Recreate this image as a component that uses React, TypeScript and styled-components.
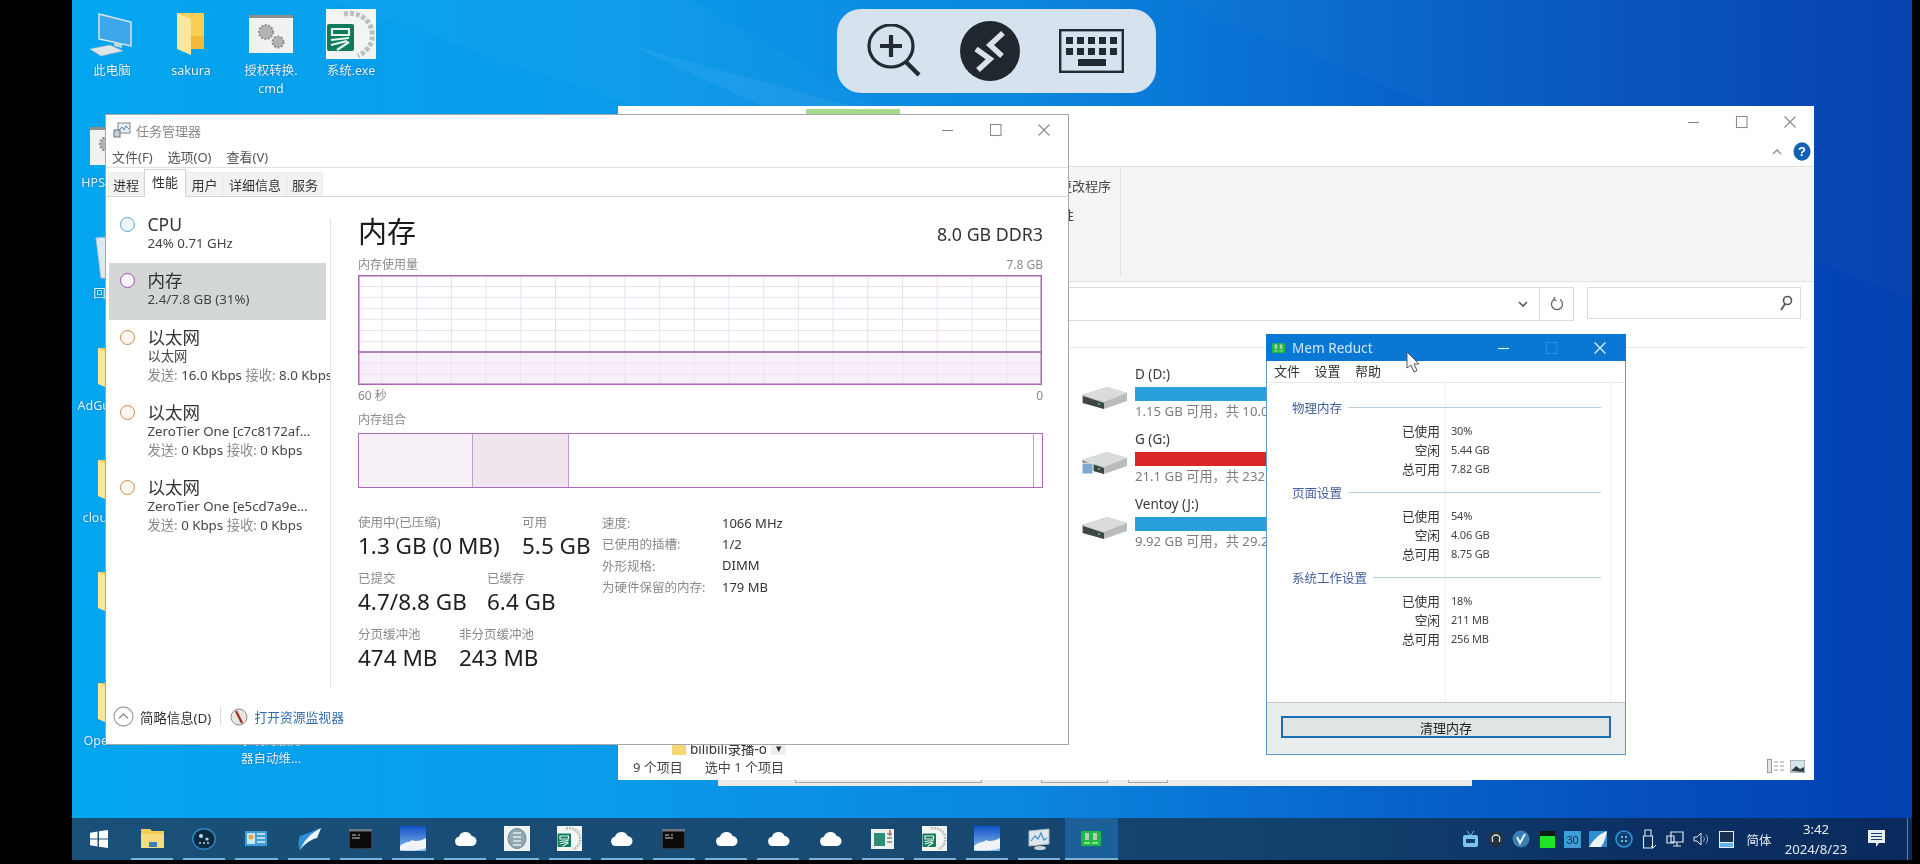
import React from "react";
import styled, { createGlobalStyle } from "styled-components";

const FONT = `"Noto Sans", "Noto Sans CJK SC", sans-serif`;

const Global = createGlobalStyle`
  html, body { margin: 0; padding: 0; background: #000; overflow: hidden; }
  body { font-family: ${FONT}; }
  #root { width: 1920px; height: 864px; }
`;

const Screen = styled.div`
  position: relative;
  width: 1920px;
  height: 864px;
  background: #000;
  overflow: hidden;
`;
const Desktop = styled.div`
  position: absolute;
  left: 72px;
  top: 0;
  width: 1840px;
  height: 860px;
  overflow: hidden;
  filter: blur(0.5px);
  background: linear-gradient(90deg, #04a6f0 0%, #0a9aea 30%, #0b86e0 52%, #0766cc 70%, #0550bd 85%, #0340b0 100%);
`;
const Wallpaper = styled.svg`
  position: absolute;
  inset: 0;
`;

/* desktop shortcuts */
const Shortcut = styled.div<{ $x: number; $y: number }>`
  position: absolute;
  left: ${(p) => p.$x - 72}px;
  top: ${(p) => p.$y}px;
  width: 80px;
  display: flex;
  flex-direction: column;
  align-items: center;
`;
const ShortcutIcon = styled.div`
  height: 52px;
  margin-bottom: 2px;
  display: flex;
  align-items: center;
  justify-content: center;
`;
const ShortcutLabel = styled.div`
  width: 76px;
  text-align: center;
  font-size: 12.5px;
  line-height: 18px;
  color: #e6f6ff;
  white-space: pre-line;
  text-shadow: 0 0 2px rgba(0, 40, 90, 0.5);
`;

/* windows */
const Win = styled.div<{ $x: number; $y: number; $w: number; $h: number }>`
  position: absolute;
  left: ${(p) => p.$x - 72}px;
  top: ${(p) => p.$y}px;
  width: ${(p) => p.$w}px;
  height: ${(p) => p.$h}px;
  box-sizing: border-box;
  display: flex;
  flex-direction: column;
  background: #fff;
  color: #222;
`;
const CtrlRow = styled.div`
  display: flex;
  margin-left: auto;
  height: 100%;
`;
const CtrlBtn = styled.div`
  width: 48px;
  display: flex;
  align-items: center;
  justify-content: center;
`;

const Controls = ({ color = "#8c8c8c", mid }: { color?: string; mid?: string }) => (
  <CtrlRow>
    <CtrlBtn><svg width="14" height="14" viewBox="0 0 14 14"><path d="M1 7.5h11" stroke={color} strokeWidth="1.2" /></svg></CtrlBtn>
    <CtrlBtn><svg width="14" height="14" viewBox="0 0 14 14"><rect x="1.5" y="1.5" width="10.5" height="11" fill="none" stroke={mid || color} strokeWidth="1.1" /></svg></CtrlBtn>
    <CtrlBtn><svg width="14" height="14" viewBox="0 0 14 14"><path d="M1.5 1.5l11 11M12.5 1.5l-11 11" stroke={color} strokeWidth="1.2" /></svg></CtrlBtn>
  </CtrlRow>
);

/* explorer */
const ExpTitle = styled.div`
  position: relative;
  height: 60px;
  flex: none;
  display: flex;
  flex-direction: column;
  border-bottom: 1px solid #e2e2e2;
`;
const ContextTab = styled.div`
  position: absolute;
  left: 188px;
  top: 3px;
  width: 94px;
  height: 6px;
  background: #a6d98c;
`;
const ExpCtrl = styled.div`
  height: 32px;
  display: flex;
`;
const RibbonToggle = styled.div`
  flex: 1;
  display: flex;
  align-items: center;
  justify-content: flex-end;
  gap: 11px;
  padding: 0 3px 2px 0;
`;
const Ribbon = styled.div`
  flex: none;
  height: 115px;
  background: #f5f5f5;
  border-bottom: 1px solid #e4e4e4;
  box-sizing: border-box;
  display: flex;
`;
const RibbonGroup = styled.div`
  width: 503px;
  height: 110px;
  box-sizing: border-box;
  border-right: 1px solid #e3e3e3;
  padding: 11px 0 0 441px;
  font-size: 13px;
  line-height: 16px;
  color: #444;
  white-space: nowrap;
`;
const RibbonSub = styled.div`
  margin: 13px 0 0 2px;
`;
const AddressRow = styled.div`
  flex: none;
  height: 66px;
  box-sizing: border-box;
  padding: 5px 5px 0 0;
  border-bottom: 1px solid #e9e9e9;
  margin-right: 8px;
  display: flex;
`;
const AddressBox = styled.div`
  flex: 1;
  height: 32px;
  border: 1px solid #dcdcdc;
  display: flex;
  justify-content: flex-end;
  align-items: center;
`;
const AddressDrop = styled.div`
  width: 33px;
  height: 100%;
  display: flex;
  align-items: center;
  justify-content: center;
  border-right: 1px solid #dcdcdc;
`;
const AddressRefresh = styled.div`
  width: 33px;
  display: flex;
  align-items: center;
  justify-content: center;
`;
const SearchBox = styled.div`
  width: 214px;
  height: 32px;
  margin-left: 13px;
  border: 1px solid #dcdcdc;
  display: flex;
  justify-content: flex-end;
  align-items: center;
  padding-right: 7px;
  box-sizing: border-box;
`;
const Drives = styled.div`
  flex: 1;
  padding: 16px 0 0 464px;
  display: flex;
  flex-direction: column;
  gap: 8px;
`;
const Drive = styled.div`
  display: flex;
  gap: 8px;
`;
const DriveIconBox = styled.div`
  width: 45px;
  padding-top: 21px;
`;
const DriveInfo = styled.div`
  width: 260px;
`;
const DriveName = styled.div`
  font-size: 13.5px;
  line-height: 20px;
  height: 23px;
  color: #3a3a3a;
`;
const DriveBar = styled.div<{ $c: string }>`
  height: 14px;
  background: ${(p) => p.$c};
`;
const DriveFree = styled.div`
  font-size: 13.2px;
  line-height: 20px;
  color: #7d7d7d;
  white-space: nowrap;
`;
const FileRow = styled.div`
  flex: none;
  height: 14px;
  padding-left: 54px;
  display: flex;
  align-items: flex-start;
  gap: 4px;
  font-size: 13.5px;
  line-height: 17px;
  color: #333;
  & > svg {
    align-self: flex-end;
  }
`;
const FileName = styled.span`
  height: 17px;
`;
const FileChevron = styled.span`
  width: 15px;
  height: 13px;
  margin-top: 1px;
  background: #eeeeee;
  font-size: 11px;
  line-height: 11px;
  text-align: center;
`;
const StatusBar = styled.div`
  flex: none;
  height: 25px;
  box-sizing: border-box;
  padding: 0 9px 3px 15px;
  display: flex;
  align-items: center;
  gap: 22px;
  font-size: 13px;
  color: #444;
`;
const ViewIcons = styled.div`
  margin-left: auto;
  display: flex;
  gap: 6px;
  align-items: center;
`;
const PeekWin = styled.div`
  position: absolute;
  left: 646px;
  top: 780px;
  width: 754px;
  height: 6px;
  background: #ebebeb;
  display: flex;
`;
const PeekBtn = styled.div<{ $l: number; $w: number }>`
  margin-left: ${(p) => p.$l}px;
  width: ${(p) => p.$w}px;
  height: 3px;
  box-sizing: border-box;
  border: 1px solid #a8a8a8;
  border-top: none;
`;

/* task manager */
const TmWin = styled(Win)`
  border: 1px solid #a6a6a6;
`;
const TmTitle = styled.div`
  height: 30px;
  flex: none;
  display: flex;
  align-items: center;
  padding-left: 7px;
  gap: 5px;
  font-size: 13px;
  color: #8b8b8b;
`;
const MenuBar = styled.div`
  height: 22px;
  flex: none;
  display: flex;
  align-items: center;
  gap: 15px;
  padding-left: 6px;
  font-size: 13px;
  color: #555;
  border-bottom: 1px solid #e0e0e0;
`;
const Tabs = styled.div`
  height: 28px;
  flex: none;
  display: flex;
  align-items: flex-end;
  padding-left: 2px;
  border-bottom: 1px solid #d4d4d4;
`;
const Tab = styled.div<{ $w: number; $on?: boolean }>`
  width: ${(p) => p.$w}px;
  height: ${(p) => (p.$on ? 28 : 24)}px;
  margin-bottom: ${(p) => (p.$on ? -1 : 0)}px;
  padding-bottom: ${(p) => (p.$on ? 5 : 1)}px;
  box-sizing: border-box;
  position: relative;
  display: flex;
  align-items: center;
  justify-content: center;
  font-size: 13px;
  color: #333;
  background: ${(p) => (p.$on ? "#fff" : "#f2f2f2")};
  border: 1px solid ${(p) => (p.$on ? "#d4d4d4" : "#ececec")};
  border-bottom: none;
`;
const TmBody = styled.div`
  flex: 1;
  min-height: 0;
  display: flex;
`;
const Sidebar = styled.div`
  width: 224px;
  flex: none;
  box-sizing: border-box;
  padding: 10px 0 0 3px;
  overflow: hidden;
`;
const SideDivider = styled.div`
  width: 1px;
  margin: 21px 0 5px;
  background: #e2e2e2;
  flex: none;
`;
const SideItem = styled.div<{ $on?: boolean }>`
  width: 217px;
  box-sizing: border-box;
  padding: 8px 0 10.3px 11px;
  display: flex;
  gap: 12.500px;
  white-space: nowrap;
  background: ${(p) => (p.$on ? "#d3d7d5" : "transparent")};
`;
const Dot = styled.div<{ $c: string; $tint: string }>`
  width: 15px;
  height: 15px;
  margin-top: 2px;
  flex: none;
  box-sizing: border-box;
  border-radius: 50%;
  border: 1.6px solid ${(p) => p.$c};
  background: ${(p) => p.$tint};
`;
const SideName = styled.div`
  height: 19px;
  font-size: 17.5px;
  line-height: 19px;
  color: #333;
`;
const SideLine = styled.div`
  height: 19px;
  font-size: 13.3px;
  line-height: 19px;
  color: #444;
`;
const Dim = styled.span`
  color: #8a8a8a;
`;
const Main = styled.div`
  flex: 1;
  min-width: 0;
  padding: 16px 25px 0 27px;
`;
const MainHead = styled.div`
  height: 42px;
  display: flex;
  justify-content: space-between;
  align-items: center;
`;
const MainTitle = styled.div`
  font-size: 29px;
  line-height: 38px;
  margin-bottom: 4px;
  color: #1a1a1a;
`;
const MainSpec = styled.div`
  font-size: 17.8px;
  line-height: 44px;
  color: #333;
`;
const CaptionRow = styled.div<{ $h: number; $end?: boolean; $top?: number }>`
  height: ${(p) => p.$h}px;
  display: flex;
  justify-content: space-between;
  align-items: ${(p) => (p.$end ? "flex-end" : "flex-start")};
  font-size: 12px;
  line-height: 16px;
  color: #8a8a8a;
  padding-top: ${(p) => (p.$end ? 0 : p.$top ?? 3)}px;
  padding-bottom: ${(p) => (p.$end ? 5 : 0)}px;
  box-sizing: border-box;
`;
const Chart = styled.svg`
  display: block;
`;
const CompBar = styled.div`
  height: 55px;
  box-sizing: border-box;
  border: 1.5px solid #a96bb6;
  display: flex;
`;
const CompSeg = styled.div<{ $w?: number; $bg: string; $line?: boolean }>`
  ${(p) => (p.$w ? `width: ${p.$w}px; flex: none;` : "flex: 1;")}
  background: ${(p) => p.$bg};
  ${(p) => (p.$line ? "border-right: 1px solid #c49ccc;" : "")}
`;
const Stats = styled.div`
  margin-top: 26px;
  display: flex;
`;
const StatsLeft = styled.div`
  width: 244px;
  flex: none;
  display: flex;
  flex-direction: column;
  gap: 8px;
`;
const StatRow = styled.div`
  display: flex;
`;
const StatCol = styled.div<{ $w: number }>`
  width: ${(p) => p.$w}px;
  flex: none;
  white-space: nowrap;
`;
const StatLabel = styled.div`
  height: 16px;
  font-size: 12.5px;
  line-height: 17px;
  color: #8a8a8a;
`;
const StatValue = styled.div`
  height: 32px;
  font-size: 22.5px;
  line-height: 32px;
  color: #1f1f1f;
`;
const Specs = styled.div`
  display: grid;
  grid-template-columns: 120px auto;
  grid-auto-rows: 21.3px;
  align-items: center;
  align-self: flex-start;
  margin-top: -2px;
  font-size: 13px;
`;
const SpecKey = styled.div`
  color: #8a8a8a;
  font-size: 12.5px;
  white-space: nowrap;
`;
const SpecVal = styled.div`
  color: #333;
`;
const TmFooter = styled.div`
  height: 51px;
  flex: none;
  display: flex;
  align-items: flex-start;
  padding: 13px 0 0 7px;
  box-sizing: border-box;
  font-size: 13.4px;
  color: #333;
`;
const FootItem = styled.div`
  display: flex;
  align-items: center;
  gap: 6px;
  height: 21px;
`;
const FootSep = styled.div`
  width: 1px;
  height: 18px;
  margin: 1px 9px;
  background: #dcdcdc;
`;
const FootLink = styled.span`
  font-size: 12.8px;
  color: #2f6db3;
`;

/* Mem Reduct */
const MemWin = styled(Win)`
  border: 1px solid #5b9bd5;
  border-top: none;
`;
const MemTitle = styled.div`
  height: 27px;
  flex: none;
  margin: 0 -1px;
  background: #0878d4;
  display: flex;
  align-items: center;
  padding: 0 2px 0 6px;
  gap: 7px;
  font-size: 13.6px;
  color: #cfe7fb;
`;
const MemMenu = styled.div`
  height: 22px;
  flex: none;
  box-sizing: border-box;
  padding: 0 0 2px 7px;
  display: flex;
  align-items: center;
  gap: 14.500px;
  font-size: 13px;
  color: #333;
  border-bottom: 1px solid #e8e8e8;
`;
const MemContent = styled.div`
  flex: 1;
  padding-top: 14px;
  display: flex;
  flex-direction: column;
  gap: 4px;
  background:
    linear-gradient(#f1f3f4, #f1f3f4) 178px 0 / 1px 100% no-repeat,
    linear-gradient(#f1f3f4, #f1f3f4) 343px 0 / 1px 100% no-repeat,
    #fff;
`;
const MemSection = styled.div``;
const MemHeading = styled.div`
  height: 20px;
  margin-bottom: 4px;
  padding: 0 24px 0 25px;
  display: flex;
  align-items: center;
  gap: 6px;
  font-size: 12.5px;
  color: #42609f;
  white-space: nowrap;
`;
const MemRule = styled.div`
  flex: 1;
  height: 1px;
  background: #b9cde0;
`;
const MemRow = styled.div`
  height: 19px;
  display: grid;
  grid-template-columns: 173px auto;
  column-gap: 11px;
  align-items: center;
`;
const MemKey = styled.div`
  text-align: right;
  font-size: 12.7px;
  color: #333;
`;
const MemVal = styled.div`
  font-size: 11px;
  color: #444;
  letter-spacing: -0.2px;
`;
const MemFoot = styled.div`
  height: 52px;
  flex: none;
  box-sizing: border-box;
  border-top: 1px solid #bfc4c6;
  background: #e9edee;
  padding: 13px 14px 0;
`;
const MemBtn = styled.div`
  height: 22px;
  box-sizing: border-box;
  border: 2px solid #1b70b4;
  background: #dfe4e4;
  display: flex;
  align-items: center;
  justify-content: center;
  font-size: 13px;
  color: #222;
`;
const Cursor = styled.svg`
  position: absolute;
  left: 1334px;
  top: 351px;
`;

/* remote overlay */
const Remote = styled.div`
  position: absolute;
  left: 765px;
  top: 9px;
  width: 319px;
  height: 84px;
  border-radius: 24px;
  background: #d6e2ee;
  display: flex;
  align-items: center;
  justify-content: space-between;
  padding: 0 32px 0 30px;
  box-sizing: border-box;
`;

/* taskbar */
const Taskbar = styled.div`
  position: absolute;
  left: 0;
  right: 0;
  top: 818px;
  height: 42px;
  background: linear-gradient(90deg, #1a5078 0%, #184a72 45%, #12406c 68%, #0c3064 85%, #0a2a5c 100%);
  display: flex;
`;
const StartBtn = styled.div`
  width: 54px;
  flex: none;
  display: flex;
  align-items: center;
  justify-content: center;
`;
const TaskBtn = styled.div<{ $on?: boolean }>`
  width: 52.2px;
  flex: none;
  position: relative;
  box-sizing: border-box;
  display: flex;
  align-items: center;
  justify-content: center;
  padding-bottom: 1px;
  background: ${(p) => (p.$on ? "#1b6099" : "transparent")};
  &::after {
    content: "";
    position: absolute;
    left: ${(p) => (p.$on ? 0 : 5)}px;
    right: ${(p) => (p.$on ? 0 : 5)}px;
    bottom: 0;
    height: 2px;
    background: #7eb3d6;
  }
`;
const Tray = styled.div`
  margin-left: auto;
  display: flex;
  align-items: center;
  color: #e4eaf0;
`;
const TrayIcon = styled.div`
  width: 25.6px;
  display: flex;
  align-items: center;
  justify-content: center;
`;
const TrayLang = styled.div`
  width: 40px;
  text-align: center;
  font-size: 12.5px;
`;
const TrayClock = styled.div`
  width: 74px;
  text-align: center;
  font-size: 13.2px;
  line-height: 20px;
`;
const TrayNotify = styled.div`
  width: 46px;
  display: flex;
  justify-content: center;
`;
const ShowDesktop = styled.div`
  width: 1px;
  height: 100%;
  margin: 0 4px 0 8px;
  background: #5d7fa3;
`;

/* ---------- icons ---------- */
const PcIcon = () => (
  <svg width="48" height="46" viewBox="0 0 48 46">
    <path d="M11 3l32 8v24l-32-7z" fill="#3ea6ea" stroke="#dfe9f0" strokeWidth="1.4" />
    <path d="M26 31l8 2v4l-8-2z" fill="#c9d4da" />
    <path d="M2 38l20-4 13 6-22 5z" fill="#dfe6ea" stroke="#aab7bf" strokeWidth=".6" />
  </svg>
);
const FolderIcon = () => (
  <svg width="30" height="44" viewBox="0 0 30 44">
    <path d="M2 1h26v36H2z" fill="#f7cf55" />
    <path d="M1 1l14 6v36L1 37z" fill="#fde79b" />
    <path d="M15 24h13v13H15z" fill="#f4b83a" />
  </svg>
);
const GearDoc = () => (
  <svg width="44" height="38" viewBox="0 0 44 38">
    <rect x="0" y="0" width="44" height="38" fill="#f1f1f1" />
    <rect x="0" y="0" width="44" height="3" fill="#8e8e8e" />
    <circle cx="17" cy="17" r="7" fill="#b3b3b3" stroke="#8f8f8f" strokeWidth="2" strokeDasharray="2 1.5" />
    <circle cx="29" cy="27" r="5.5" fill="#b3b3b3" stroke="#8f8f8f" strokeWidth="2" strokeDasharray="2 1.5" />
  </svg>
);
const YiTile = ({ s = 50 }: { s?: number }) => (
  <svg width={s} height={s} viewBox="0 0 50 50">
    <rect width="50" height="50" fill="#f3f5f4" />
    <path d="M18 5c14-3 26 5 28 17s-4 20-14 25" fill="none" stroke="#b9c1c0" strokeWidth="5" strokeDasharray="4 2" />
    <rect x="1" y="15" width="27" height="27" rx="2" fill="#0f7a5c" />
    <path d="M6 20h17v6H6zM5 31l18-2M5 36l16-4M11 41l12-8" stroke="#e8f5ef" strokeWidth="2.2" fill="none" />
  </svg>
);
const BinIcon = () => (
  <svg width="40" height="50" viewBox="0 0 40 50">
    <path d="M4 6l32-2-4 42H9z" fill="#dfeaf0" stroke="#b4c4ce" />
    <circle cx="21" cy="25" r="8" fill="#1f8fdc" />
  </svg>
);
const Cloud = () => (
  <svg width="23" height="15" viewBox="0 0 24 16" preserveAspectRatio="none">
    <path d="M6 16a5 5 0 0 1-.8-9.900A7 7 0 0 1 18.400 5.400 5 5 0 0 1 18 16z" fill="#fff" />
  </svg>
);
const Term = () => (
  <svg width="23" height="20" viewBox="0 0 23 20">
    <rect width="23" height="20" fill="#0c0c0c" stroke="#5b6a76" />
    <rect x="0" y="0" width="23" height="2.500" fill="#6e7780" />
    <path d="M3 6h4M9 6h2M3 9h8" stroke="#cfcfcf" strokeWidth="1" />
  </svg>
);
const Sky = () => (
  <svg width="26" height="25" viewBox="0 0 26 25">
    <defs>
      <linearGradient id="skyg" x1="0" y1="0" x2="0" y2="1">
        <stop offset="0" stopColor="#0f50c8" />
        <stop offset="1" stopColor="#8fc2f0" />
      </linearGradient>
    </defs>
    <rect width="26" height="25" fill="url(#skyg)" />
    <path d="M0 20c5-5 9-3 12-6 3 2 9 1 14-2v10c-6 3-20 3-26 2z" fill="#f0f4f8" />
  </svg>
);
const StartIcon = () => (
  <svg width="18" height="18" viewBox="0 0 18 18">
    <path d="M0 2.800l7.500-1.200v6.800H0zM9 1.300L18 0v8.400H9zM0 9.600h7.500v6.800L0 15.200zM9 9.600h9V18l-9-1.300z" fill="#fff" />
  </svg>
);
const TaskFolder = () => (
  <svg width="23" height="19" viewBox="0 0 23 19">
    <path d="M0 0h9l2 2h12v17H0z" fill="#f6cc55" />
    <rect y="5" width="23" height="14" fill="#f9db7f" />
    <rect x="8" y="13" width="8" height="5" fill="#3a80c4" />
  </svg>
);
const DotCircle = () => (
  <svg width="24" height="22" viewBox="0 0 24 22">
    <ellipse cx="12" cy="11" rx="11.300" ry="10.300" fill="#0e2a40" stroke="#2c86c4" strokeWidth="1.4" />
    <circle cx="9" cy="8" r="2" fill="#b8d8ea" />
    <circle cx="15" cy="11" r="1.600" fill="#b8d8ea" />
    <path d="M7 15h2M11 15h2M15 15h2" stroke="#b8d8ea" strokeWidth="1.5" />
  </svg>
);
const BlueApp = () => (
  <svg width="22" height="15" viewBox="0 0 22 15">
    <rect width="22" height="15" fill="#3e9fd6" />
    <rect x="2" y="2" width="8" height="11" fill="#cde6f4" />
    <circle cx="6" cy="6" r="2.500" fill="#e8a33a" />
    <path d="M12 3h8M12 7h8M12 11h8" stroke="#dff1fa" strokeWidth="1.400" />
  </svg>
);
const Feather = () => (
  <svg width="24" height="22" viewBox="0 0 24 22">
    <path d="M24 0L3 8C1 12 1 18 3 22 8 15 15 11 20 10z" fill="#2f8fd8" />
    <path d="M24 0C14 5 7 12 3 22 8 15 15 11 20 10z" fill="#eef6fb" />
  </svg>
);
const ServerDoc = () => (
  <svg width="26" height="25" viewBox="0 0 26 25">
    <rect width="26" height="25" fill="#eef2f3" />
    <ellipse cx="13" cy="12.500" rx="9" ry="10" fill="#8ea9b2" stroke="#6e8791" />
    <path d="M9 7h8M9 11h8M9 15h8M9 19h8" stroke="#e3ecef" strokeWidth="1.400" />
  </svg>
);
const GreenDoc = () => (
  <svg width="23" height="20" viewBox="0 0 23 20">
    <rect width="23" height="20" fill="#eef1f1" />
    <rect x="3" y="4" width="11" height="13" fill="#2f8a76" />
    <path d="M16 5h5M16 9h5M16 13h5" stroke="#7c8a8a" strokeWidth="1.400" />
    <path d="M19 1v6" stroke="#c0392b" strokeWidth="1.200" />
  </svg>
);
const MonitorApp = () => (
  <svg width="24" height="22" viewBox="0 0 24 22">
    <path d="M2 3l20-2v15L2 18z" fill="#dfe7ec" stroke="#aeb9c0" />
    <path d="M4 13l4-5 3 3 3-6 3 7 3-2" fill="none" stroke="#3e8fcf" strokeWidth="1.200" />
    <ellipse cx="13" cy="20" rx="6" ry="2" fill="#cfd6da" />
  </svg>
);
const MemIcon = ({ w = 20, h = 15 }: { w?: number; h?: number }) => (
  <svg width={w} height={h} viewBox="0 0 20 15">
    <rect x="0" y="0" width="20" height="15" rx="1" fill="#1fb944" />
    <rect x="4" y="2" width="4" height="7" fill="#b8c9b8" />
    <rect x="12" y="2" width="4" height="7" fill="#b8c9b8" />
    <path d="M3 12h6M11 12h6" stroke="#a7f0a9" strokeWidth="1.400" />
  </svg>
);
const TmIcon = () => (
  <svg width="18" height="16" viewBox="0 0 18 16">
    <rect x="5" y="1" width="12" height="10" fill="#e8edf1" stroke="#7d8c98" />
    <path d="M6 8l3-3 2 3 2-4 3 3" fill="none" stroke="#4d88b8" strokeWidth="1" />
    <rect x="1" y="8" width="6" height="7" fill="#c6d0d7" stroke="#67747e" />
  </svg>
);
const DriveIcon = ({ badge }: { badge?: boolean }) => (
  <svg width="45" height="24" viewBox="0 0 45 24">
    <path d="M0 10L25 2 45 8v8L22 24 0 18z" fill="#b9bcbb" />
    <path d="M0 10l22 7 23-9-20-6z" fill="#dadcdb" />
    <path d="M1 11l21 7v6L1 18z" fill="#3f4644" />
    <circle cx="17" cy="19" r="1" fill="#3ddc54" />
    {badge && <rect x="0" y="13" width="11" height="11" fill="#7fa8cf" stroke="#fff" />}
  </svg>
);
const Chev = ({ d, c = "#666" }: { d: string; c?: string }) => (
  <svg width="10" height="7" viewBox="0 0 10 7"><path d={d} fill="none" stroke={c} strokeWidth="1.6" /></svg>
);

const ZoomIcon = () => (
  <svg width="54" height="54" viewBox="0 0 54 54">
    <ellipse cx="24" cy="22" rx="22" ry="21" fill="none" stroke="#222a33" strokeWidth="3.2" />
    <path d="M24 11v22M13 22h22" stroke="#222a33" strokeWidth="4.2" />
    <path d="M39 38l13 13" stroke="#222a33" strokeWidth="4.4" />
  </svg>
);
const ConnIcon = () => (
  <svg width="60" height="60" viewBox="0 0 60 60">
    <circle cx="30" cy="30" r="30" fill="#20272e" />
    <path d="M43 12L30 24l12 11M16 28l14 10-12 11" fill="none" stroke="#d8e2ea" strokeWidth="5.500" />
  </svg>
);
const KeyboardIcon = () => (
  <svg width="65" height="44" viewBox="0 0 65 44">
    <rect x="1.2" y="1.2" width="62.6" height="41.6" fill="none" stroke="#222a33" strokeWidth="2.4" />
    {[0, 1, 2, 3, 4].map((i) => (
      <React.Fragment key={i}>
        <rect x={7 + i * 11} y="8" width="7" height="7" fill="#222a33" />
        <rect x={7 + i * 11} y="19" width="7" height="7" fill="#222a33" />
      </React.Fragment>
    ))}
    <rect x="19" y="30" width="28" height="7" fill="#222a33" />
  </svg>
);

const CHART_V = Array.from({ length: 19 }, (_, i) => 24 + i * 34.7);
const CHART_H = [11.6, 22.3, 33.3, 44.3, 55.6, 66.6, 88, 99.3];
const UsageChart = () => (
  <Chart width="684" height="110" viewBox="0 0 684 110">
    <rect x="0" y="77" width="684" height="33" fill="#f7f0f8" />
    {CHART_V.map((x) => <path key={x} d={`M${x} 0V110`} stroke="#ecdff0" strokeWidth="1" />)}
    {CHART_H.map((y) => <path key={y} d={`M0 ${y}H684`} stroke="#eddff0" strokeWidth="1" />)}
    <path d="M0 77H684" stroke="#9a57a9" strokeWidth="1.5" />
    <rect x=".75" y=".75" width="682.5" height="108.5" fill="none" stroke="#a866b5" strokeWidth="1.5" />
  </Chart>
);

type Net = { sub: string; up: string; down: string };
const NETS: Net[] = [
  { sub: "以太网", up: "16.0 Kbps", down: "8.0 Kbps" },
  { sub: "ZeroTier One [c7c8172af...", up: "0 Kbps", down: "0 Kbps" },
  { sub: "ZeroTier One [e5cd7a9e...", up: "0 Kbps", down: "0 Kbps" },
];

const TASK_ICONS: React.ReactNode[] = [
  <TaskFolder />, <DotCircle />, <BlueApp />, <Feather />, <Term />, <Sky />, <Cloud />, <ServerDoc />,
  <YiTile s={25} />, <Cloud />, <Term />, <Cloud />, <Cloud />, <Cloud />, <GreenDoc />, <YiTile s={25} />,
  <Sky />, <MonitorApp />,
];

const TRAY: React.ReactNode[] = [
  <svg width="15" height="18" viewBox="0 0 15 18"><path d="M4 1l3 4M11 1L8 5" stroke="#7cc3e8" /><rect y="5" width="15" height="12" rx="2" fill="#7cc3e8" /><path d="M3 9h9v4H3z" fill="#123f6c" /></svg>,
  <svg width="16" height="18" viewBox="0 0 16 18"><circle cx="8" cy="9" r="7.5" fill="#26323c" /><path d="M4 9a4 4 0 0 1 8 0M4.5 9v3M11.5 9v3" stroke="#dfe6ea" strokeWidth="1.3" fill="none" /></svg>,
  <svg width="18" height="18" viewBox="0 0 18 18"><circle cx="9" cy="9" r="8.5" fill="#3a7fb2" /><path d="M5 7l3 6 5-9" stroke="#e6f0f6" strokeWidth="2" fill="none" /></svg>,
  <svg width="15" height="17" viewBox="0 0 15 17"><rect width="15" height="17" fill="#0a1f14" /><rect y="5" width="15" height="12" fill="#22e32a" /></svg>,
  <svg width="17" height="17" viewBox="0 0 17 17"><rect width="17" height="17" fill="#3f9cd6" /><text x="8.5" y="13" fontSize="11" textAnchor="middle" fill="#0f2c52" fontFamily="Liberation Sans">30</text></svg>,
  <svg width="18" height="16" viewBox="0 0 18 16"><path d="M18 0H0v16h18z" fill="#2f8fd0" /><path d="M18 0C10 3 4 9 0 16h12c3-4 5-10 6-16z" fill="#eef5fa" /></svg>,
  <svg width="18" height="18" viewBox="0 0 18 18"><circle cx="9" cy="9" r="8" fill="#123f6c" stroke="#2f94d8" strokeWidth="1.6" /><path d="M6 6h2v2H6zM10 6h2v2h-2zM6 10h2v2H6zM10 10h2v2h-2z" fill="#6bb7e4" /></svg>,
  <svg width="14" height="21" viewBox="0 0 14 21"><path d="M3 1h6v6H3zM1.5 7h9v12h-9z" fill="none" stroke="#dfe6ec" strokeWidth="1.1" /><path d="M9 17l2 2 3-3" stroke="#dfe6ec" fill="none" /></svg>,
  <svg width="18" height="18" viewBox="0 0 18 18"><path d="M5 2h12v10H5zM1 6h7v7H1zM11 12v4M7 16h8" fill="none" stroke="#dfe6ec" strokeWidth="1.2" /></svg>,
  <svg width="16" height="14" viewBox="0 0 16 14"><path d="M1 5h3l4-4v12L4 9H1z" fill="none" stroke="#dfe6ec" /><path d="M10.5 4.5a4 4 0 0 1 0 5M13 2.5a7 7 0 0 1 0 9" fill="none" stroke="#8fa9c2" /></svg>,
  <svg width="15" height="17" viewBox="0 0 15 17"><rect width="15" height="17" fill="#e6edf2" /><rect x="1" y="1" width="13" height="10" fill="#16324f" /><rect x="1" y="12" width="13" height="4" fill="#5fb6e6" /></svg>,
];

const MEM = [
  { h: "物理内存", r: [["已使用", "30%"], ["空闲", "5.44 GB"], ["总可用", "7.82 GB"]] },
  { h: "页面设置", r: [["已使用", "54%"], ["空闲", "4.06 GB"], ["总可用", "8.75 GB"]] },
  { h: "系统工作设置", r: [["已使用", "18%"], ["空闲", "211 MB"], ["总可用", "256 MB"]] },
];

export default function App() {
  return (
    <Screen>
      <Global />
      <Desktop>
        <Wallpaper width="1840" height="860" viewBox="0 0 1840 860">
          <polygon points="260,0 620,0 800,106 560,106" fill="#ffffff" opacity="0.025" />
          <polygon points="560,46 780,106 690,106" fill="#ffffff" opacity="0.05" />
          <polygon points="1100,0 1840,0 1840,300" fill="#ffffff" opacity="0.02" />
        </Wallpaper>

        <Shortcut $x={72} $y={8}><ShortcutIcon><PcIcon /></ShortcutIcon><ShortcutLabel>此电脑</ShortcutLabel></Shortcut>
        <Shortcut $x={151} $y={8}><ShortcutIcon><FolderIcon /></ShortcutIcon><ShortcutLabel>sakura</ShortcutLabel></Shortcut>
        <Shortcut $x={231} $y={8}><ShortcutIcon><GearDoc /></ShortcutIcon><ShortcutLabel>{"授权转换.\ncmd"}</ShortcutLabel></Shortcut>
        <Shortcut $x={311} $y={8}><ShortcutIcon><YiTile s={50} /></ShortcutIcon><ShortcutLabel>系统.exe</ShortcutLabel></Shortcut>
        <Shortcut $x={72} $y={120}><ShortcutIcon><GearDoc /></ShortcutIcon><ShortcutLabel>HPSServer</ShortcutLabel></Shortcut>
        <Shortcut $x={72} $y={231}><ShortcutIcon><BinIcon /></ShortcutIcon><ShortcutLabel>回收站</ShortcutLabel></Shortcut>
        <Shortcut $x={72} $y={343}><ShortcutIcon><FolderIcon /></ShortcutIcon><ShortcutLabel>AdGuardHo</ShortcutLabel></Shortcut>
        <Shortcut $x={72} $y={455}><ShortcutIcon><FolderIcon /></ShortcutIcon><ShortcutLabel>cloudflare</ShortcutLabel></Shortcut>
        <Shortcut $x={72} $y={567}><ShortcutIcon><FolderIcon /></ShortcutIcon></Shortcut>
        <Shortcut $x={72} $y={678}><ShortcutIcon><FolderIcon /></ShortcutIcon><ShortcutLabel>OpenVPN</ShortcutLabel></Shortcut>
        <Shortcut $x={151} $y={678}><ShortcutIcon /><ShortcutLabel>NVI</ShortcutLabel></Shortcut>
        <Shortcut $x={231} $y={678}><ShortcutIcon /><ShortcutLabel>{"系统的服务\n器自动维..."}</ShortcutLabel></Shortcut>

        <Remote><ZoomIcon /><ConnIcon /><KeyboardIcon /></Remote>

        <PeekWin>
          <PeekBtn $l={77} $w={187} />
          <PeekBtn $l={59} $w={67} />
          <PeekBtn $l={20} $w={40} />
        </PeekWin>

        <Win $x={618} $y={106} $w={1196} $h={674}>
          <ExpTitle>
            <ContextTab />
            <ExpCtrl><Controls /></ExpCtrl>
            <RibbonToggle>
              <Chev d="M1 6l4-4 4 4" c="#9a9a9a" />
              <svg width="18" height="19" viewBox="0 0 18 19"><ellipse cx="9" cy="9.500" rx="8.500" ry="9.200" fill="#0f62b4" /><text x="9" y="14" fontSize="13" fontWeight="700" textAnchor="middle" fill="#fff" fontFamily="Liberation Sans">?</text></svg>
            </RibbonToggle>
          </ExpTitle>
          <Ribbon>
            <RibbonGroup>
              更改程序
              <RibbonSub>性</RibbonSub>
            </RibbonGroup>
          </Ribbon>
          <AddressRow>
            <AddressBox>
              <AddressDrop><Chev d="M1 1l4 4 4-4" c="#555" /></AddressDrop>
              <AddressRefresh>
                <svg width="14" height="16" viewBox="0 0 14 16"><path d="M4 3.500a5.500 5.500 0 1 0 6 0M5 1L3.500 3.600 6.500 4.500" fill="none" stroke="#666" strokeWidth="1.3" /></svg>
              </AddressRefresh>
            </AddressBox>
            <SearchBox>
              <svg width="14" height="16" viewBox="0 0 14 16"><circle cx="8.500" cy="5.500" r="4" fill="none" stroke="#555" strokeWidth="1.6" /><path d="M6 9l-4 6" stroke="#555" strokeWidth="1.8" /></svg>
            </SearchBox>
          </AddressRow>
          <Drives>
            <Drive>
              <DriveIconBox><DriveIcon /></DriveIconBox>
              <DriveInfo><DriveName>D (D:)</DriveName><DriveBar $c="#28a0dc" /><DriveFree>1.15 GB 可用，共 10.0 GB</DriveFree></DriveInfo>
            </Drive>
            <Drive>
              <DriveIconBox><DriveIcon badge /></DriveIconBox>
              <DriveInfo><DriveName>G (G:)</DriveName><DriveBar $c="#da2626" /><DriveFree>21.1 GB 可用，共 232 GB</DriveFree></DriveInfo>
            </Drive>
            <Drive>
              <DriveIconBox><DriveIcon /></DriveIconBox>
              <DriveInfo><DriveName>Ventoy (J:)</DriveName><DriveBar $c="#28a0dc" /><DriveFree>9.92 GB 可用，共 29.2 GB</DriveFree></DriveInfo>
            </Drive>
          </Drives>
          <FileRow>
            <svg width="14" height="12" viewBox="0 0 14 12"><rect width="14" height="12" fill="#f7d774" /></svg>
            <FileName>bilibili录播-o</FileName>
            <FileChevron>▾</FileChevron>
          </FileRow>
          <StatusBar>
            <span>9 个项目</span>
            <span>选中 1 个项目</span>
            <ViewIcons>
              <svg width="17" height="14" viewBox="0 0 17 14"><rect x=".5" y=".5" width="4" height="13" fill="#e4e4e4" stroke="#999" /><path d="M7 3h4M13 3h4M7 7h4M13 7h4M7 11h4M13 11h4" stroke="#9a9a9a" /></svg>
              <svg width="15" height="13" viewBox="0 0 15 13"><rect width="15" height="13" fill="#d7e6ee" stroke="#888" /><path d="M1 11l5-5 4 3 4-2v5z" fill="#2f3d48" /></svg>
            </ViewIcons>
          </StatusBar>
        </Win>

        <TmWin $x={105} $y={114} $w={964} $h={631}>
          <TmTitle><TmIcon />任务管理器<Controls /></TmTitle>
          <MenuBar><span>文件(F)</span><span>选项(O)</span><span>查看(V)</span></MenuBar>
          <Tabs>
            <Tab $w={36}>进程</Tab>
            <Tab $w={42} $on>性能</Tab>
            <Tab $w={37}>用户</Tab>
            <Tab $w={64}>详细信息</Tab>
            <Tab $w={36}>服务</Tab>
          </Tabs>
          <TmBody>
            <Sidebar>
              <SideItem>
                <Dot $c="#5aa3d2" $tint="#eef5fb" />
                <div><SideName>CPU</SideName><SideLine>24% 0.71 GHz</SideLine></div>
              </SideItem>
              <SideItem $on>
                <Dot $c="#a24cb0" $tint="#faf5fb" />
                <div><SideName>内存</SideName><SideLine>2.4/7.8 GB (31%)</SideLine></div>
              </SideItem>
              {NETS.map((n) => (
                <SideItem key={n.sub}>
                  <Dot $c="#c98a4a" $tint="#fdf6ee" />
                  <div>
                    <SideName>以太网</SideName>
                    <SideLine>{n.sub}</SideLine>
                    <SideLine><Dim>发送:</Dim> {n.up} <Dim>接收:</Dim> {n.down}</SideLine>
                  </div>
                </SideItem>
              ))}
            </Sidebar>
            <SideDivider />
            <Main>
              <MainHead><MainTitle>内存</MainTitle><MainSpec>8.0 GB DDR3</MainSpec></MainHead>
              <CaptionRow $h={20} $top={2}><span>内存使用量</span><span>7.8 GB</span></CaptionRow>
              <UsageChart />
              <CaptionRow $h={22}><span>60 秒</span><span>0</span></CaptionRow>
              <CaptionRow $h={26} $end><span>内存组合</span></CaptionRow>
              <CompBar>
                <CompSeg $w={113} $bg="#f6f1f6" $line />
                <CompSeg $w={95} $bg="#efe5ef" $line />
                <CompSeg $bg="#fff" $line />
                <CompSeg $w={8} $bg="#fff" />
              </CompBar>
              <Stats>
                <StatsLeft>
                  <StatRow>
                    <StatCol $w={164}><StatLabel>使用中(已压缩)</StatLabel><StatValue>1.3 GB (0 MB)</StatValue></StatCol>
                    <StatCol $w={80}><StatLabel>可用</StatLabel><StatValue>5.5 GB</StatValue></StatCol>
                  </StatRow>
                  <StatRow>
                    <StatCol $w={129}><StatLabel>已提交</StatLabel><StatValue>4.7/8.8 GB</StatValue></StatCol>
                    <StatCol $w={80}><StatLabel>已缓存</StatLabel><StatValue>6.4 GB</StatValue></StatCol>
                  </StatRow>
                  <StatRow>
                    <StatCol $w={101}><StatLabel>分页缓冲池</StatLabel><StatValue>474 MB</StatValue></StatCol>
                    <StatCol $w={90}><StatLabel>非分页缓冲池</StatLabel><StatValue>243 MB</StatValue></StatCol>
                  </StatRow>
                </StatsLeft>
                <Specs>
                  <SpecKey>速度:</SpecKey><SpecVal>1066 MHz</SpecVal>
                  <SpecKey>已使用的插槽:</SpecKey><SpecVal>1/2</SpecVal>
                  <SpecKey>外形规格:</SpecKey><SpecVal>DIMM</SpecVal>
                  <SpecKey>为硬件保留的内存:</SpecKey><SpecVal>179 MB</SpecVal>
                </Specs>
              </Stats>
            </Main>
          </TmBody>
          <TmFooter>
            <FootItem>
              <svg width="21" height="21" viewBox="0 0 21 21"><circle cx="10.500" cy="10.500" r="9.500" fill="#fff" stroke="#a8a8a8" strokeWidth="1.3" /><path d="M6 12.500l4.500-4.500 4.500 4.500" fill="none" stroke="#8a8a8a" strokeWidth="1.3" /></svg>
              简略信息(D)
            </FootItem>
            <FootSep />
            <FootItem>
              <svg width="18" height="18" viewBox="0 0 18 18"><circle cx="9" cy="9" r="8" fill="#e9e6e2" stroke="#8e8e8e" /><path d="M6 3l6 12" stroke="#a0322e" strokeWidth="2.4" /></svg>
              <FootLink>打开资源监视器</FootLink>
            </FootItem>
          </TmFooter>
        </TmWin>

        <MemWin $x={1266} $y={334} $w={360} $h={421}>
          <MemTitle><MemIcon w={13} h={12} />Mem Reduct<Controls color="#e8f3fb" mid="#2a8be0" /></MemTitle>
          <MemMenu><span>文件</span><span>设置</span><span>帮助</span></MemMenu>
          <MemContent>
            {MEM.map((s) => (
              <MemSection key={s.h}>
                <MemHeading>{s.h}<MemRule /></MemHeading>
                {s.r.map(([k, v]) => (
                  <MemRow key={k}><MemKey>{k}</MemKey><MemVal>{v}</MemVal></MemRow>
                ))}
              </MemSection>
            ))}
          </MemContent>
          <MemFoot><MemBtn>清理内存</MemBtn></MemFoot>
        </MemWin>

        <Cursor width="14" height="22" viewBox="0 0 14 22">
          <path d="M1 1v16l4-3 3 7 3-1.500-3-6.500h5z" fill="#fff" stroke="#555" strokeWidth="1" />
        </Cursor>

        <Taskbar>
          <StartBtn><StartIcon /></StartBtn>
          {TASK_ICONS.map((icon, i) => <TaskBtn key={i}>{icon}</TaskBtn>)}
          <TaskBtn $on><MemIcon /></TaskBtn>
          <Tray>
            {TRAY.map((t, i) => <TrayIcon key={i}>{t}</TrayIcon>)}
            <TrayLang>简体</TrayLang>
            <TrayClock><div>3:42</div><div>2024/8/23</div></TrayClock>
            <TrayNotify>
              <svg width="17" height="19" viewBox="0 0 17 19"><path d="M0 0h17v13h-6l-3 4v-4H0z" fill="#e8eef3" /><path d="M3 3.500h11M3 6.500h11M3 9.500h11" stroke="#123f6c" /></svg>
            </TrayNotify>
            <ShowDesktop />
          </Tray>
        </Taskbar>
      </Desktop>
    </Screen>
  );
}
